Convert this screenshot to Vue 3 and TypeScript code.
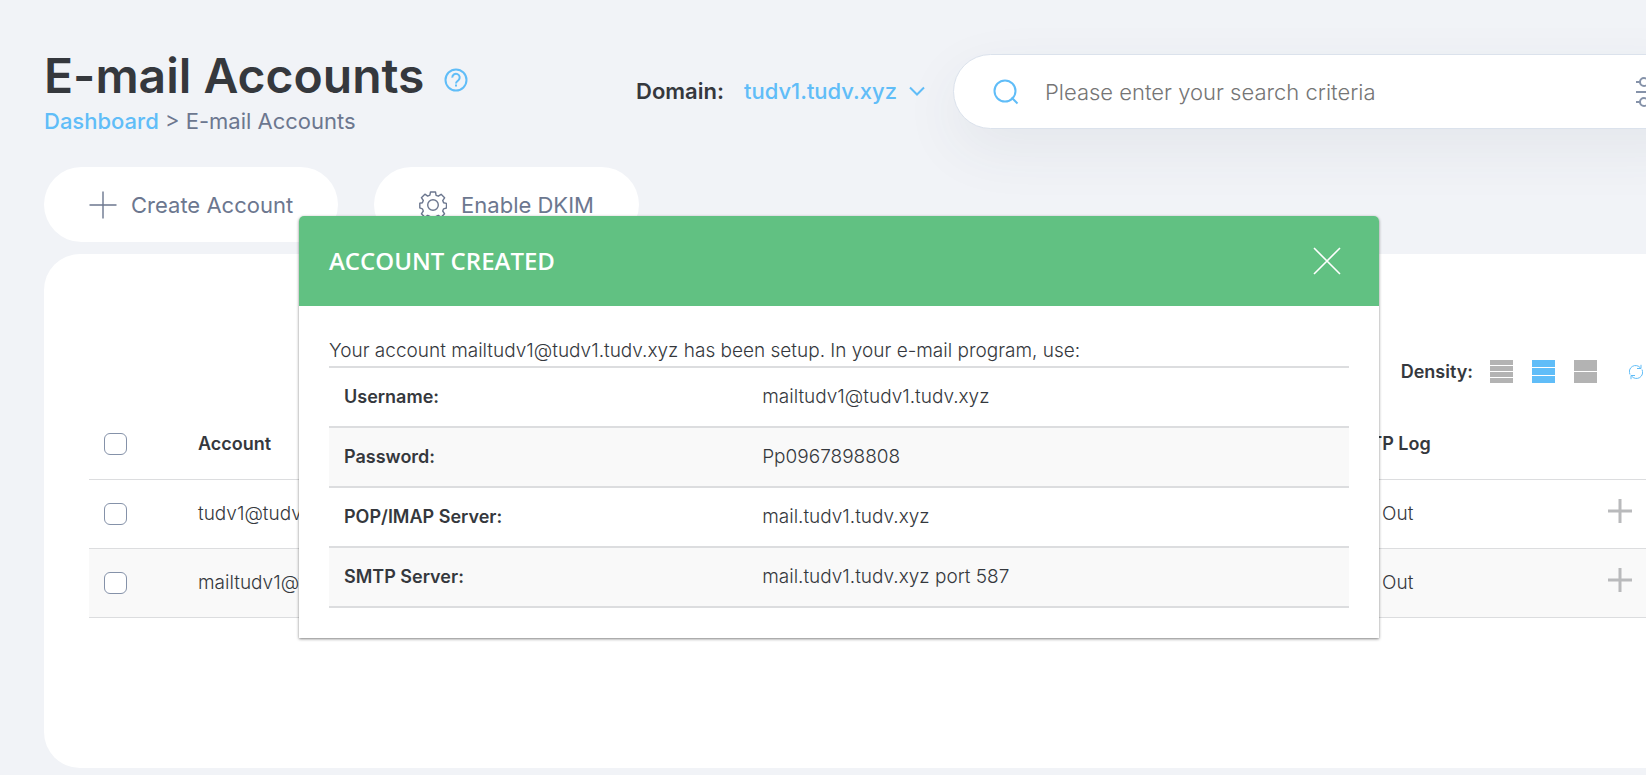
<script setup lang="ts">
import { ref } from 'vue'

interface Account { address: string; selected: boolean }
interface Setting { label: string; value: string }

const domain = ref('tudv1.tudv.xyz')
const search = ref('')
const allSelected = ref(false)
const modalOpen = ref(true)
const density = ref('normal')

const densities = [
  { id: 'compact', label: 'Compact density', rows: [[0, 5], [6, 5], [12, 5], [18, 5]] },
  { id: 'normal', label: 'Normal density', rows: [[0, 7], [8, 7], [16, 7]] },
  { id: 'comfortable', label: 'Comfortable density', rows: [[0, 11], [12, 11]] },
]

const accounts = ref<Account[]>([
  { address: 'tudv1@tudv1.tudv.xyz', selected: false },
  { address: 'mailtudv1@tudv1.tudv.xyz', selected: false },
])

const settings: Setting[] = [
  { label: 'Username:', value: 'mailtudv1@tudv1.tudv.xyz' },
  { label: 'Password:', value: 'Pp0967898808' },
  { label: 'POP/IMAP Server:', value: 'mail.tudv1.tudv.xyz' },
  { label: 'SMTP Server:', value: 'mail.tudv1.tudv.xyz port 587' },
]

function toggleAll() {
  accounts.value.forEach((a) => { a.selected = allSelected.value })
}
</script>

<template>
  <div class="page">
    <header class="top">
      <div class="heading">
        <div class="title-row">
          <h1>E-mail Accounts</h1>
          <button class="plain help" type="button" aria-label="Help">
            <svg width="24" height="24" viewBox="0 0 24 24" fill="none" stroke="currentColor" stroke-width="2">
              <circle cx="12" cy="12" r="10.5" />
              <path d="M8.3 9.600a3.700 3.700 0 1 1 6.100 2.700c-1.300 1-2.400 1.500-2.400 3.100" />
              <path d="M12 16.600v2" />
            </svg>
          </button>
        </div>
        <nav class="crumbs"><a href="#">Dashboard</a> &gt; E-mail Accounts</nav>
      </div>
      <div class="domain">
        <label for="domain">Domain:</label>
        <select id="domain" v-model="domain">
          <option>tudv1.tudv.xyz</option>
        </select>
        <svg width="16" height="10" viewBox="0 0 16 10" fill="none" stroke="currentColor" stroke-width="2">
          <path d="M1 1.500 8 8.500 15 1.500" />
        </svg>
      </div>
      <div class="search">
        <svg class="lens" width="26" height="26" viewBox="0 0 26 26" fill="none" stroke="currentColor" stroke-width="2">
          <circle cx="12" cy="12" r="10.500" />
          <path d="m18.500 18.500 6 6" />
        </svg>
        <input v-model="search" type="text" aria-label="Search" placeholder="Please enter your search criteria">
        <button class="plain filter" type="button" aria-label="Filters">
          <svg width="30" height="30" viewBox="0 0 30 30" fill="none" stroke="currentColor" stroke-width="2">
            <path d="M0 5h4M12 5h18M0 15h18M26 15h4M0 25h4M12 25h18" />
            <circle cx="8" cy="5" r="4" /><circle cx="22" cy="15" r="4" /><circle cx="8" cy="25" r="4" />
          </svg>
        </button>
      </div>
    </header>

    <div class="actions">
      <button type="button" class="pill">
        <svg width="28" height="28" viewBox="0 0 28 28" stroke="currentColor" stroke-width="1.400"><path d="M14 .5v27M.5 14h27" /></svg>
        Create Account
      </button>
      <button type="button" class="pill">
        <svg width="28" height="28" viewBox="0 0 28 28" fill="none" stroke="currentColor" stroke-width="1.400" stroke-linejoin="round">
          <circle cx="14" cy="14" r="5.300" />
          <path d="M11.500 1h5l.6 3.300 2.200.9 2.800-1.900 3.500 3.500-1.900 2.800.9 2.200 2.900.6v4.600l-2.900.8-.9 2.200 1.900 2.800-3.500 3.500-2.800-1.900-2.200.9-.6 3.200h-5l-.6-3.200-2.200-.9-2.800 1.900-3.500-3.500 1.900-2.800-.9-2.200L.8 16.900v-4.700l2.600-.5.9-2.200-1.900-2.800 3.500-3.500 2.800 1.900 2.200-.9z" />
        </svg>
        Enable DKIM
      </button>
    </div>

    <main class="panel">
      <div class="toolbar">
        <span class="density-label">Density:</span>
        <button
          v-for="d in densities" :key="d.id" type="button" class="plain density"
          :class="{ active: density === d.id }" :aria-label="d.label" @click="density = d.id"
        >
          <svg width="23" height="23" viewBox="0 0 23 23" fill="currentColor">
            <rect v-for="r in d.rows" :key="r[0]" x="0" :y="r[0]" width="23" :height="r[1]" />
          </svg>
        </button>
        <button type="button" class="plain refresh" aria-label="Refresh">
          <svg width="14" height="16" viewBox="0 0 14 16" fill="none" stroke="currentColor">
            <path d="M1 10.500A6.200 6.200 0 0 1 11.500 4M8 4.500h4V.8M13 5.500A6.200 6.200 0 0 1 2.500 12M6 11.500H2v3.700" />
          </svg>
        </button>
      </div>
      <table class="list">
        <thead>
          <tr>
            <th class="check"><input v-model="allSelected" type="checkbox" aria-label="Select all accounts" @change="toggleAll"></th>
            <th>Account</th>
            <th class="log">SMTP Log</th>
            <th class="more"></th>
          </tr>
        </thead>
        <tbody>
          <tr v-for="a in accounts" :key="a.address">
            <td class="check"><input v-model="a.selected" type="checkbox" :aria-label="'Select ' + a.address"></td>
            <td>{{ a.address }}</td>
            <td class="log"><span class="dirs"><span>In</span><span>|</span><span>Out</span></span></td>
            <td class="more">
              <button type="button" class="plain expand" aria-label="Expand">
                <svg width="24" height="24" viewBox="0 0 24 24" stroke="currentColor" stroke-width="3"><path d="M12 0v24M0 12h24" /></svg>
              </button>
            </td>
          </tr>
        </tbody>
      </table>
    </main>

    <div v-if="modalOpen" class="overlay">
      <section class="modal" role="dialog" aria-labelledby="modal-title">
        <header class="modal-head">
          <h2 id="modal-title">ACCOUNT CREATED</h2>
          <button type="button" class="plain" aria-label="Close" @click="modalOpen = false">
            <svg width="28" height="28" viewBox="0 0 28 28" stroke="currentColor" stroke-width="1.600"><path d="m1 1 26 26M27 1 1 27" /></svg>
          </button>
        </header>
        <div class="modal-body">
          <p>Your account mailtudv1@tudv1.tudv.xyz has been setup. In your e-mail program, use:</p>
          <table class="settings">
            <tbody>
              <tr v-for="s in settings" :key="s.label">
                <th scope="row">{{ s.label }}</th>
                <td>{{ s.value }}</td>
              </tr>
            </tbody>
          </table>
        </div>
      </section>
    </div>
  </div>
</template>

<style>
body { background: #f1f3f7; }
</style>

<style scoped>
.page {
  position: relative;
  box-sizing: border-box;
  min-height: 100vh;
  padding: 44px 0 7px 44px;
  overflow: hidden;
  background: #f1f3f7;
  color: #35383d;
  font-family: Inter, "Liberation Sans", sans-serif;
  font-size: 19px;
  line-height: 24px;
  font-weight: 300;
}
svg { display: block; flex: none; }
h1, h2, p { margin: 0; }
.plain { display: block; padding: 0; border: 0; background: none; color: inherit; cursor: pointer; }

.top { display: flex; align-items: flex-start; height: 123px; }
.heading { flex: 0 0 592px; }
.title-row { display: flex; align-items: center; gap: 20px; height: 64px; }
h1 { font-size: 48px; line-height: 64px; font-weight: 600; white-space: nowrap; }
.help { color: #60bdf8; margin-top: 7px; }
.crumbs { color: #6c778f; font-size: 22px; line-height: 26px; font-weight: 400; }
a { color: #60bdf8; font-weight: 500; text-decoration: none; }

.domain { flex: 0 0 317px; display: flex; align-items: center; height: 94px; font-size: 22px; line-height: 30px; }
.domain label { font-weight: 600; margin-right: 20px; }
select {
  appearance: none; height: 30px; padding: 0; border: 0; background: none; margin-right: 12px;
  font: inherit; font-weight: 500; color: #60bdf8;
}
.domain svg { color: #60bdf8; }

.search {
  flex: 1; display: flex; align-items: center; box-sizing: border-box;
  height: 75px; margin: 10px -71px 0 0; padding: 0 50px 0 39px;
  border: 1px solid #dbe2ec; border-radius: 38px; background: #fff;
  box-shadow: 0 20px 60px rgba(60, 64, 90, 0.07);
}
.lens { color: #60bdf8; margin-right: 26px; }
input[type="text"] {
  flex: 1; min-width: 0; height: 30px; padding: 0; border: 0; outline: 0; background: none;
  font: inherit; font-size: 22px; line-height: 30px; color: #35383d;
}
input::placeholder { color: #757575; opacity: 1; }
.filter { color: #8592a9; }

.actions { display: flex; gap: 36px; }
.pill {
  display: flex; align-items: center; gap: 14px; height: 75px; padding: 0 45px;
  border: 0; border-radius: 38px; background: #fff; color: #6c778f;
  font: inherit; font-size: 22px; font-weight: 400; cursor: pointer;
}

.panel {
  box-sizing: border-box; min-height: 514px; margin: 12px -40px 0 0; padding: 102px 0 0 45px;
  border-radius: 36px; background: #fff;
}
.toolbar { display: flex; align-items: center; justify-content: flex-end; height: 31px; padding-right: 43px; }
.density-label { font-size: 18px; font-weight: 600; margin-right: 17px; }
.density { margin-right: 19px; color: #b3b3b3; }
.density.active { color: #60bdf8; }
.refresh { margin-left: 13px; color: #60bdf8; }

table { width: 100%; border-collapse: collapse; }
th, td { padding: 0; text-align: left; font-weight: inherit; }
th { font-size: 18px; font-weight: 600; }
.list { margin-top: 23px; table-layout: fixed; }
.list tr { height: 69px; border-bottom: 1px solid #dcdddf; }
.list tbody tr:nth-child(even), .settings tr:nth-child(even) { background: #f9f9f9; }
.list .check { width: 94px; padding-left: 15px; }
.list .log { width: 266px; }
.list .more { width: 78px; }
.check input {
  appearance: none; display: block; width: 23px; height: 22px; margin: 0;
  border: 1px solid #8592a9; border-radius: 6px; background: #fff;
}
.check input:checked { background: #60bdf8; }
.dirs { display: flex; gap: 9px; }
.expand { color: #b9babc; margin-bottom: 6px; }

.overlay { position: absolute; inset: 0 -32px 0 0; display: flex; justify-content: center; align-items: flex-start; padding-top: 216px; }
.modal {
  width: 1080px; max-width: 90%; border-radius: 5px 5px 0 0; background: #fff;
  box-shadow: 0 1px 3px rgba(0, 0, 0, 0.5);
}
.modal-head {
  display: flex; align-items: center; justify-content: space-between; height: 90px;
  padding: 0 38px 0 30px; border-radius: 5px 5px 0 0; background: #61c182; color: #fff;
}
h2 { font-family: "Open Sans", "Noto Sans", sans-serif; font-size: 24px; line-height: 32px; font-weight: 600; }
.modal-body { padding: 33px 30px 30px; }
.settings { margin-top: 3px; table-layout: fixed; }
.settings tr { height: 60px; border-top: 2px solid #dcdddf; border-bottom: 2px solid #dcdddf; }
.settings th { width: 41%; box-sizing: border-box; padding-left: 15px; }
.settings td { padding-left: 15px; }
</style>
